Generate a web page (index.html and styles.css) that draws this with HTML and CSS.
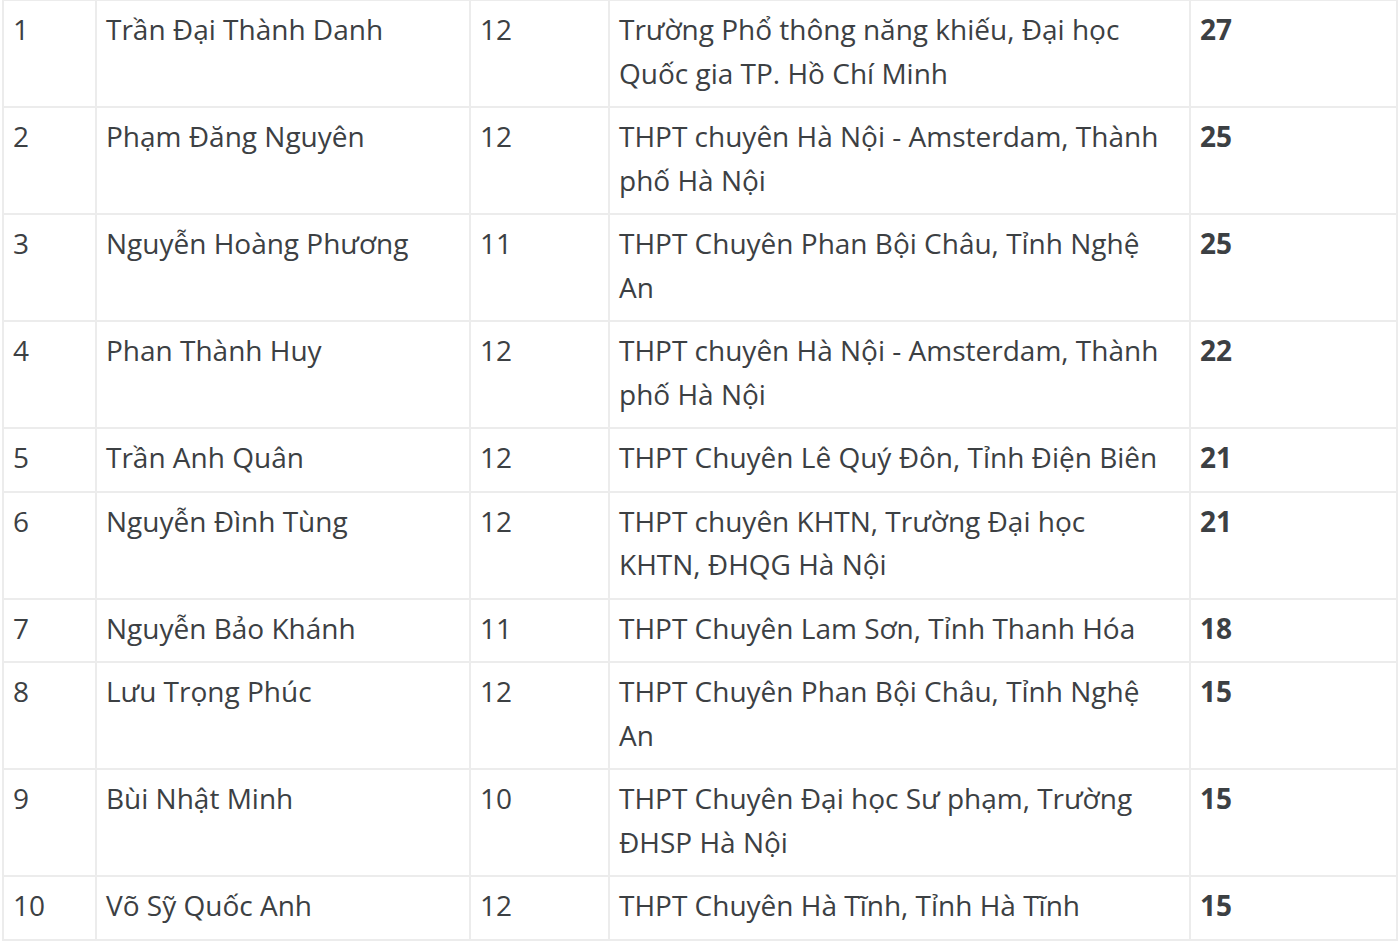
FILE: index.html
```html
<!DOCTYPE html>
<html lang="vi">
<head>
<meta charset="utf-8">
<title>Bảng xếp hạng</title>
<link rel="stylesheet" href="styles.css">
</head>
<body>
<table class="rank">
  <colgroup>
    <col class="c-no"><col class="c-name"><col class="c-grade"><col class="c-school"><col class="c-score">
  </colgroup>
  <tbody>
    <tr><td>1</td><td>Trần Đại Thành Danh</td><td>12</td><td class="school">Trường Phổ thông năng khiếu, Đại học Quốc gia TP. Hồ Chí Minh</td><td class="score">27</td></tr>
    <tr><td>2</td><td>Phạm Đăng Nguyên</td><td>12</td><td class="school">THPT chuyên Hà Nội - Amsterdam, Thành phố Hà Nội</td><td class="score">25</td></tr>
    <tr><td>3</td><td>Nguyễn Hoàng Phương</td><td>11</td><td class="school">THPT Chuyên Phan Bội Châu, Tỉnh Nghệ An</td><td class="score">25</td></tr>
    <tr><td>4</td><td>Phan Thành Huy</td><td>12</td><td class="school">THPT chuyên Hà Nội - Amsterdam, Thành phố Hà Nội</td><td class="score">22</td></tr>
    <tr><td>5</td><td>Trần Anh Quân</td><td>12</td><td class="school">THPT Chuyên Lê Quý Đôn, Tỉnh Điện Biên</td><td class="score">21</td></tr>
    <tr><td>6</td><td>Nguyễn Đình Tùng</td><td>12</td><td class="school">THPT chuyên KHTN, Trường Đại học KHTN, ĐHQG Hà Nội</td><td class="score">21</td></tr>
    <tr><td>7</td><td>Nguyễn Bảo Khánh</td><td>11</td><td class="school">THPT Chuyên Lam Sơn, Tỉnh Thanh Hóa</td><td class="score">18</td></tr>
    <tr><td>8</td><td>Lưu Trọng Phúc</td><td>12</td><td class="school">THPT Chuyên Phan Bội Châu, Tỉnh Nghệ An</td><td class="score">15</td></tr>
    <tr><td>9</td><td>Bùi Nhật Minh</td><td>10</td><td class="school">THPT Chuyên Đại học Sư phạm, Trường ĐHSP Hà Nội</td><td class="score">15</td></tr>
    <tr><td>10</td><td>Võ Sỹ Quốc Anh</td><td>12</td><td class="school">THPT Chuyên Hà Tĩnh, Tỉnh Hà Tĩnh</td><td class="score">15</td></tr>
  </tbody>
</table>
</body>
</html>
```
FILE: styles.css
```css
html, body {
  margin: 0;
  padding: 0;
  background: #ffffff;
}

body {
  padding-left: 2px;
  font-family: "Open Sans", Roboto, "Liberation Sans", sans-serif;
  color: #3c4043;
}

.rank {
  margin-top: -1px;
  border-collapse: collapse;
  table-layout: fixed;
  width: 1394px;
  font-size: 28px;
  line-height: 43.5px;
}

.c-no { width: 93px; }
.c-name { width: 374px; }
.c-grade { width: 139px; }
.c-school { width: 581px; }
.c-score { width: 207px; }

.rank td {
  border: 2px solid #ececec;
  padding: 7px 9px 11px 9px;
  vertical-align: top;
  text-align: left;
}

.rank td.school {
  padding-right: 18px;
}

.rank td.score {
  font-weight: 700;
}
```
